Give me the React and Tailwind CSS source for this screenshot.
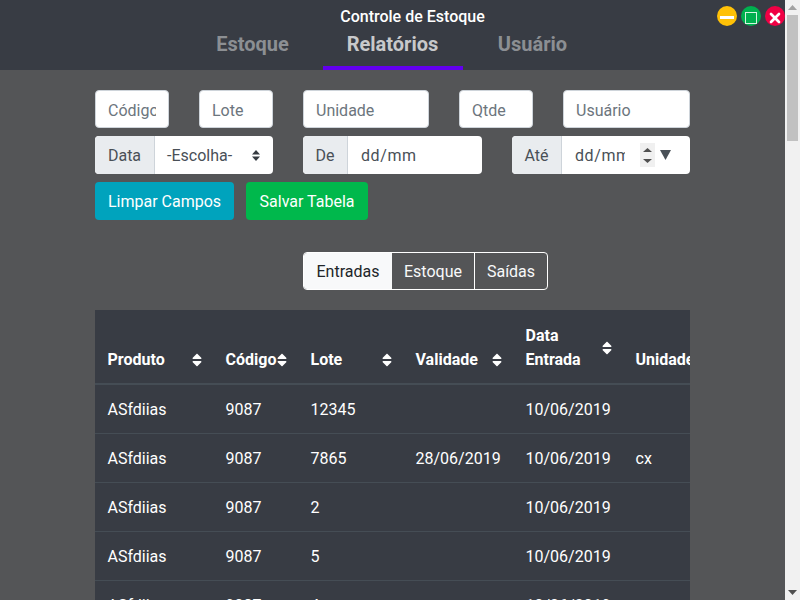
import { X } from 'lucide-react';
import { FaSort } from 'react-icons/fa';

const rows = [
  { produto: 'ASfdiias', codigo: '9087', lote: '12345', validade: '', entrada: '10/06/2019', unidade: '' },
  { produto: 'ASfdiias', codigo: '9087', lote: '7865', validade: '28/06/2019', entrada: '10/06/2019', unidade: 'cx' },
  { produto: 'ASfdiias', codigo: '9087', lote: '2', validade: '', entrada: '10/06/2019', unidade: '' },
  { produto: 'ASfdiias', codigo: '9087', lote: '5', validade: '', entrada: '10/06/2019', unidade: '' },
  { produto: 'ASfdiias', codigo: '9087', lote: '4', validade: '', entrada: '10/06/2019', unidade: '' },
];

function Field({ placeholder, className }) {
  return (
    <input
      placeholder={placeholder}
      className={`h-[38px] bg-white border border-[#ced4da] rounded px-3 pt-[2px] text-base text-[#495057] placeholder:text-[#6c757d] placeholder:opacity-100 outline-none ${className}`}
    />
  );
}

function Prepend({ children, className }) {
  return (
    <span className={`flex items-center justify-center h-full pt-[2px] bg-[#e9ecef] border-r border-[#ced4da] text-[#495057] shrink-0 ${className}`}>
      {children}
    </span>
  );
}

function Th({ children, className }) {
  return (
    <th className={`pt-[14px] pb-[11px] pl-[12.5px] pr-3 align-bottom text-left font-bold border-b-2 border-[#454d55] ${className}`}>
      <div className="flex items-center justify-between mr-[-3.5px]">
        <span>{children}</span>
        <FaSort size={16} className="shrink-0 -ml-[4px]" />
      </div>
    </th>
  );
}

export default function App() {
  return (
    <div className="relative flex h-screen overflow-hidden bg-[#545557] font-['Roboto',sans-serif] text-base">
      <main className="flex-1 min-w-0 overflow-hidden">
        {/* Topo */}
        <header className="h-[70px] bg-[#383c44] flex flex-col items-center">
          <h1 className="h-[32px] pt-[5px] pl-10 text-white font-medium leading-6">Controle de Estoque</h1>
          <nav className="flex">
            <a className="w-[140px] h-[38px] text-center text-xl font-bold leading-6 text-[#8c8f93]">Estoque</a>
            <a className="w-[140px] h-[38px] text-center text-xl font-bold leading-6 text-[#c8c9cb] border-b-4 border-[#6200ee]">Relatórios</a>
            <a className="w-[140px] h-[38px] text-center text-xl font-bold leading-6 text-[#8c8f93]">Usuário</a>
          </nav>
        </header>

        <div className="w-[595px] ml-[95px] pt-5">
          {/* Filtros */}
          <div className="flex gap-[30px]">
            <Field placeholder="Código" className="w-[74px]" />
            <Field placeholder="Lote" className="w-[74px]" />
            <Field placeholder="Unidade" className="w-[126px]" />
            <Field placeholder="Qtde" className="w-[74px]" />
            <Field placeholder="Usuário" className="w-[127px]" />
          </div>

          <div className="flex gap-[30px] mt-2">
            <div className="flex h-[38px] w-[178px] bg-white rounded overflow-hidden">
              <Prepend className="w-[60px]">Data</Prepend>
              <div className="flex-1 flex items-center justify-between pl-3 pr-[13px] text-[#495057]">
                <span className="pt-[1px]">-Escolha-</span>
                <svg width="8" height="11" viewBox="0 0 8 11" className="fill-[#343a40]">
                  <path d="M4 0 L8 4.5 H0 Z" />
                  <path d="M4 11 L0 6.5 H8 Z" />
                </svg>
              </div>
            </div>
            <div className="flex h-[38px] w-[179px] bg-white rounded overflow-hidden">
              <Prepend className="w-[45px]">De</Prepend>
              <div className="flex-1 flex items-center pl-[13px] pt-[2px] text-[#495057] tracking-[0.6px]">dd/mm</div>
            </div>
            <div className="flex h-[38px] w-[178px] bg-white rounded overflow-hidden">
              <Prepend className="w-[50px]">Até</Prepend>
              <div className="flex-1 flex items-center pl-[13px] text-[#495057]">
                <span className="w-[50px] pt-[2px] overflow-hidden whitespace-nowrap tracking-[0.6px]">dd/mm</span>
                <span className="flex flex-col justify-between items-center ml-[15px] w-[15px] h-[24px] pt-[5px] pb-[4px] bg-[#f0f0f0]">
                  <svg width="9" height="4" viewBox="0 0 9 4" className="fill-[#505050]"><path d="M4.5 0 L9 4 H0 Z" /></svg>
                  <svg width="9" height="4" viewBox="0 0 9 4" className="fill-[#505050]"><path d="M4.5 4 L0 0 H9 Z" /></svg>
                </span>
                <svg width="11" height="10" viewBox="0 0 11 10" className="ml-[5px] fill-[#495057]"><path d="M5.5 10 L0 0 H11 Z" /></svg>
              </div>
            </div>
          </div>

          <div className="flex gap-3 mt-2">
            <button className="h-[38px] w-[139px] pt-[2px] rounded bg-[#00a3bd] text-white">Limpar Campos</button>
            <button className="h-[38px] w-[122px] pt-[2px] rounded bg-[#00b84c] text-white">Salvar Tabela</button>
          </div>

          {/* Abas da tabela */}
          <div className="flex w-[245px] h-[38px] mt-8 ml-[208px] border border-white rounded text-[#f8f9fa]">
            <button className="w-[88px] pt-[2px] bg-[#f8f9fa] text-[#212529] rounded-l-[3px]">Entradas</button>
            <button className="w-[83px] pt-[2px] border-r border-white">Estoque</button>
            <button className="flex-1 pt-[2px]">Saídas</button>
          </div>

          {/* Tabela */}
          <div className="mt-5 w-[595px] overflow-hidden bg-[#383c44]">
            <table className="table-fixed w-[700px] border-collapse text-white">
              <thead>
                <tr>
                  <Th className="w-[118px]">Produto</Th>
                  <Th className="w-[85px]">Código</Th>
                  <Th className="w-[105px]">Lote</Th>
                  <Th className="w-[110px]">Validade</Th>
                  <Th className="w-[110px]">Data Entrada</Th>
                  <th className="pt-[14px] pb-[11px] pl-[12.5px] pr-3 align-bottom text-left font-bold border-b-2 border-[#454d55]">Unidade</th>
                </tr>
              </thead>
              <tbody>
                {rows.map((r, i) => (
                  <tr key={i} className="border-t border-[#454d55] first:border-t-0">
                    <td className="pt-[13px] pb-[11px] pl-[12.5px] pr-3 leading-6">{r.produto}</td>
                    <td className="pt-[13px] pb-[11px] pl-[12.5px] pr-3 leading-6">{r.codigo}</td>
                    <td className="pt-[13px] pb-[11px] pl-[12.5px] pr-3 leading-6">{r.lote}</td>
                    <td className="pt-[13px] pb-[11px] pl-[12.5px] pr-3 leading-6">{r.validade}</td>
                    <td className="pt-[13px] pb-[11px] pl-[12.5px] pr-3 leading-6">{r.entrada}</td>
                    <td className="pt-[13px] pb-[11px] pl-[12.5px] pr-3 leading-6">{r.unidade}</td>
                  </tr>
                ))}
              </tbody>
            </table>
          </div>
        </div>
      </main>

      {/* Barra de rolagem */}
      <aside className="w-[15px] shrink-0 bg-[#f1f1f1] flex flex-col items-center">
        <svg width="9" height="5" viewBox="0 0 9 5" className="mt-[5px] fill-[#a3a3a3]"><path d="M4.5 0 L9 5 H0 Z" /></svg>
        <div className="w-[11px] h-[126px] mt-[5px] bg-[#c1c1c1]" />
        <svg width="9" height="5" viewBox="0 0 9 5" className="mt-auto mb-[5px] fill-[#505050]"><path d="M4.5 5 L0 0 H9 Z" /></svg>
      </aside>

      {/* Botões da janela */}
      <div className="absolute top-[6px] left-[717px] flex gap-1">
        <button className="w-5 h-5 pt-[3px] rounded-full bg-[#ffc107] flex items-center justify-center">
          <span className="w-3.5 h-[3px] bg-white" />
        </button>
        <button className="w-5 h-5 pt-[3px] rounded-full bg-[#00b04f] flex items-center justify-center">
          <span className="w-3 h-3 border-[1.5px] border-[#d5f3e0]" />
        </button>
        <button className="w-5 h-5 pt-[3px] rounded-full bg-[#f00044] flex items-center justify-center">
          <X size={16} strokeWidth={4} className="text-white" />
        </button>
      </div>
    </div>
  );
}
